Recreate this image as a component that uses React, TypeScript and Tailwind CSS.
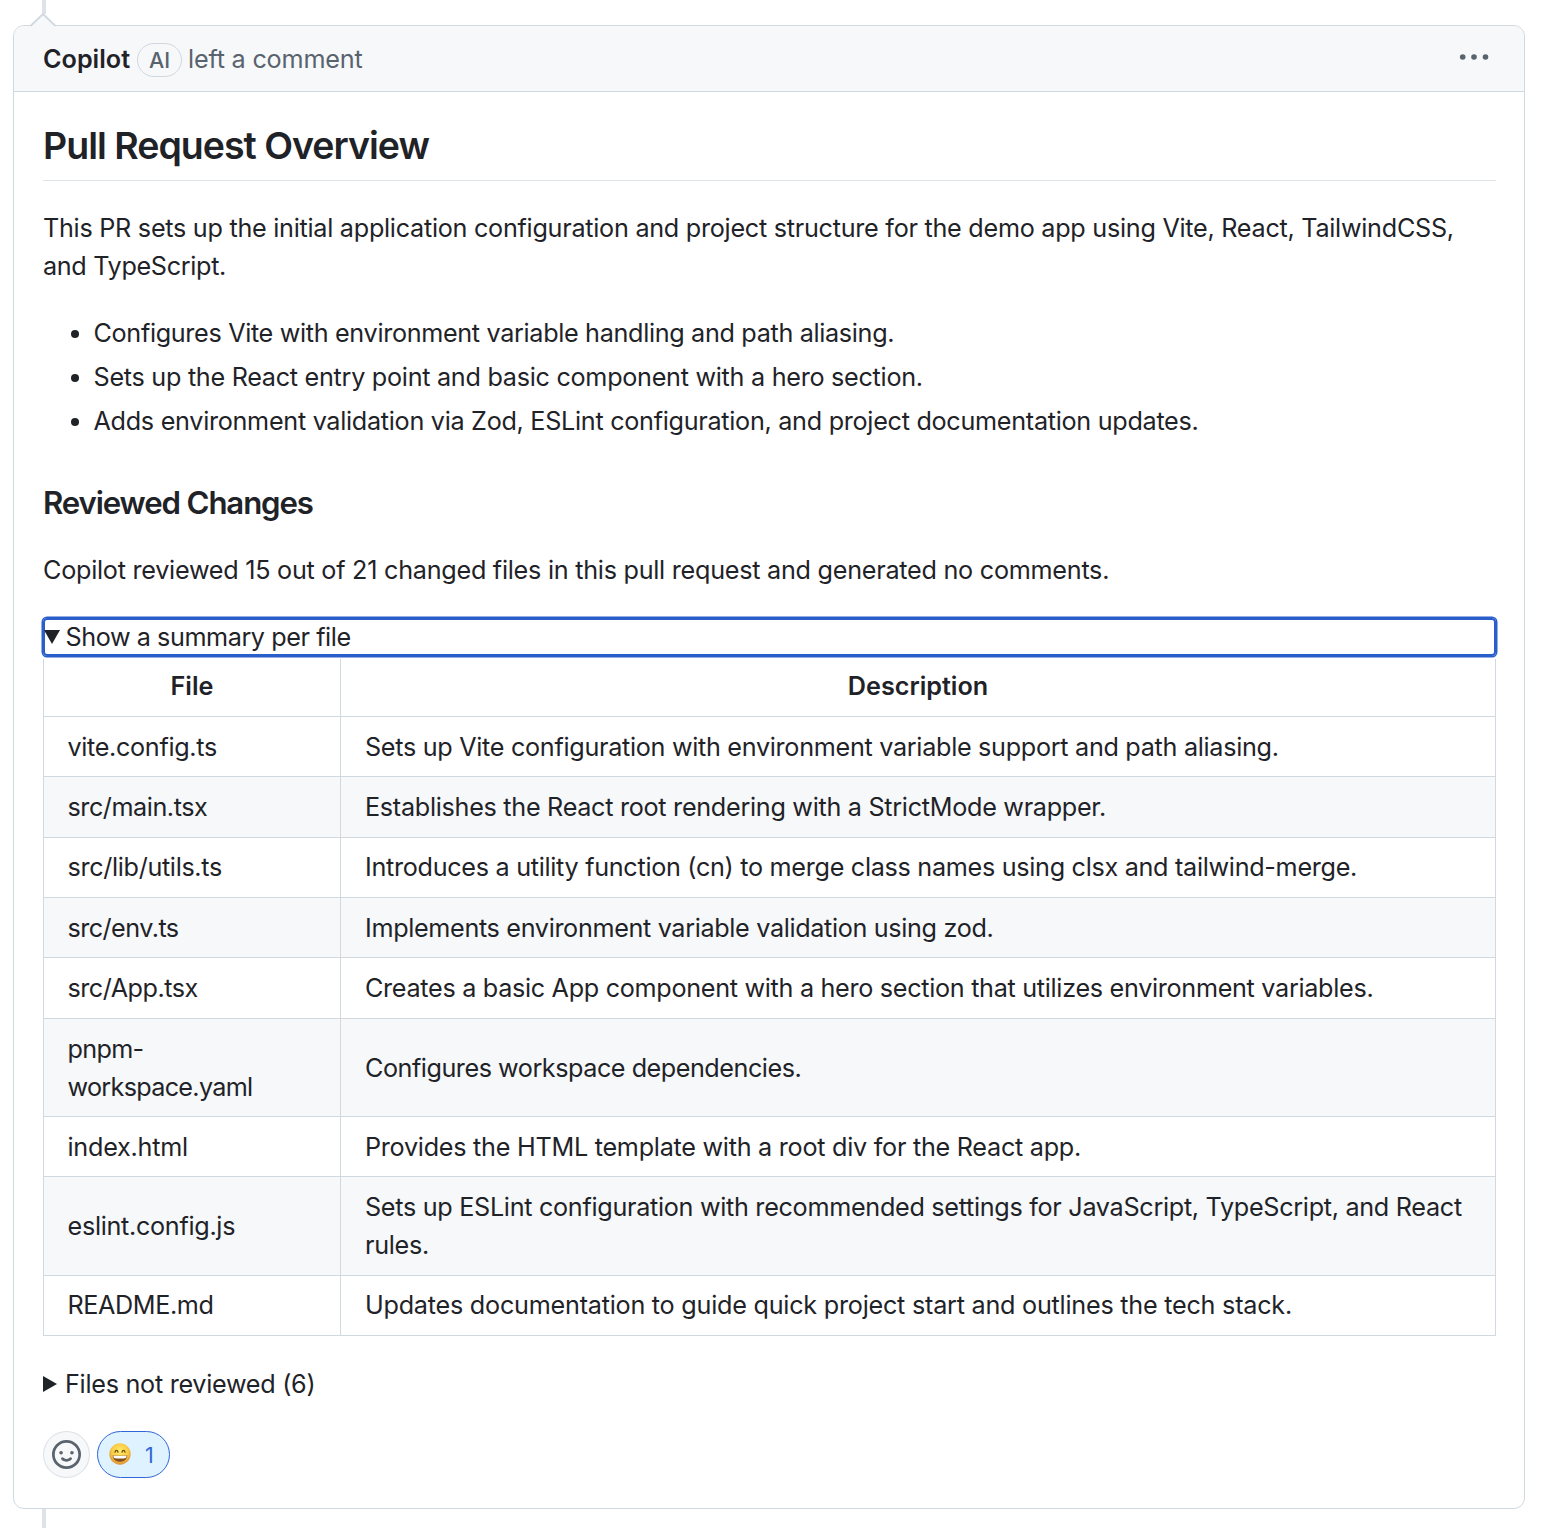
type Row = { file: string; fileTracking: string; description: string; tracking: string; height: string; pad: string; tint?: boolean };

const rows: Row[] = [
  { file: "vite.config.ts", fileTracking: "tracking-[-0.33px]", description: "Sets up Vite configuration with environment variable support and path aliasing.", tracking: "tracking-[-0.3px]", height: "h-[60px]", pad: "pt-[3px]" },
  { file: "src/main.tsx", fileTracking: "tracking-[-0.46px]", description: "Establishes the React root rendering with a StrictMode wrapper.", tracking: "tracking-[-0.29px]", height: "h-[61px]", pad: "pt-[3px]", tint: true },
  { file: "src/lib/utils.ts", fileTracking: "tracking-[-0.33px]", description: "Introduces a utility function (cn) to merge class names using clsx and tailwind-merge.", tracking: "tracking-[-0.3px]", height: "h-[60px]", pad: "pt-[1px]" },
  { file: "src/env.ts", fileTracking: "tracking-[-0.55px]", description: "Implements environment variable validation using zod.", tracking: "tracking-[-0.34px]", height: "h-[60px]", pad: "pt-[3px]", tint: true },
  { file: "src/App.tsx", fileTracking: "tracking-[-0.5px]", description: "Creates a basic App component with a hero section that utilizes environment variables.", tracking: "tracking-[-0.305px]", height: "h-[61px]", pad: "pt-[3px]" },
  { file: "pnpm-workspace.yaml", fileTracking: "tracking-[-0.7px]", description: "Configures workspace dependencies.", tracking: "tracking-[-0.47px]", height: "h-[98px]", pad: "pt-[3px]", tint: true },
  { file: "index.html", fileTracking: "tracking-[-0.24px]", description: "Provides the HTML template with a root div for the React app.", tracking: "tracking-[-0.265px]", height: "h-[60px]", pad: "pt-[3px]" },
  { file: "eslint.config.js", fileTracking: "tracking-[-0.3px]", description: "Sets up ESLint configuration with recommended settings for JavaScript, TypeScript, and React rules.", tracking: "tracking-[-0.3px]", height: "h-[99px]", pad: "pt-[3px]", tint: true },
  { file: "README.md", fileTracking: "tracking-[-0.4px]", description: "Updates documentation to guide quick project start and outlines the tech stack.", tracking: "tracking-[-0.24px]", height: "h-[60px]", pad: "pt-[1px]" },
];

const bullets = [
  { text: "Configures Vite with environment variable handling and path aliasing.", tracking: "tracking-[-0.33px]" },
  { text: "Sets up the React entry point and basic component with a hero section.", tracking: "tracking-[-0.28px]" },
  { text: "Adds environment validation via Zod, ESLint configuration, and project documentation updates.", tracking: "tracking-[-0.29px]" },
];

function GrinEmoji() {
  return (
    <svg viewBox="0 0 22 22" className="size-[22px]" aria-label="grinning face">
      <defs>
        <radialGradient id="face" cx="50%" cy="38%" r="62%">
          <stop offset="0" stopColor="#ffec6e" />
          <stop offset="0.6" stopColor="#fbcb45" />
          <stop offset="1" stopColor="#dc9035" />
        </radialGradient>
      </defs>
      <circle cx="11" cy="11" r="10.7" fill="url(#face)" />
      <path d="M6 9.200c.3-1.300.8-1.900 1.500-1.900s1.200.6 1.500 1.900M13 9.200c.3-1.300.8-1.900 1.500-1.900s1.200.6 1.500 1.900" fill="none" stroke="#6b4a12" strokeWidth="1.300" strokeLinecap="round" />
      <path d="M3.800 12.200c2.300.6 12.100.6 14.400 0 .2 3.800-3 6.500-7.200 6.500S3.600 16 3.800 12.200z" fill="#85501f" />
      <path d="M4.400 12.500c3 .6 10.200.6 13.200 0 0 1-.2 1.800-.6 2.400-2.800.7-9.200.7-12 0-.4-.6-.6-1.400-.6-2.400z" fill="#fff" />
    </svg>
  );
}

export default function App() {
  return (
    <div className="relative h-[1528px] w-[1558px] overflow-hidden bg-white pt-[25px] pl-[13px] font-['Inter',sans-serif] text-[25.2px] leading-[38px] text-[#1f2328]">
      <div className="absolute top-0 left-[42px] h-[14px] w-1 bg-[#dfe2e8]" />
      <div className="absolute top-[1509px] left-[42px] h-[19px] w-1 bg-[#dfe2e8]" />

      <section className="h-[1484px] w-[1512px] rounded-[11px] border border-[#d1d9e0] bg-white">
        <header className="flex h-[66px] items-center rounded-t-[10px] border-b border-[#d1d9e0] bg-[#f6f8fa] pt-[2px] pr-[35px] pl-[29px]">
          <span className="-mt-px mb-px font-semibold">Copilot</span>
          <span className="ml-[7px] flex h-[34px] w-[45px] items-center justify-center rounded-full border border-[#d1d9e0] text-[21.500px] font-medium text-[#59636e]">AI</span>
          <span className="-mt-px mb-px ml-[6px] tracking-[-0.2px] text-[#59636e]">left a comment</span>
          <svg viewBox="0 0 30 6" className="mb-[5px] ml-auto h-[6px] w-[30px]" fill="#59636e">
            <circle cx="3.700" cy="3" r="2.800" />
            <circle cx="15" cy="3" r="2.800" />
            <circle cx="26.500" cy="3" r="2.800" />
          </svg>
        </header>

        <div className="pt-[30px] pr-[28px] pl-[29px]">
          <h2 className="h-[59px] border-b border-[#d1d9e0]/70 text-[37.500px] leading-[47px] font-semibold tracking-[-1px]">Pull Request Overview</h2>
          <p className="mt-[28px]">
            <span className="tracking-[-0.27px]">This PR sets up the initial application configuration and project structure for the demo app using Vite, React, TailwindCSS,</span>
            <br />
            <span className="tracking-[-0.33px]">and TypeScript.</span>
          </p>
          <ul className="mt-[30px] flex flex-col gap-[6px]">
            {bullets.map((b) => (
              <li key={b.text} className="flex h-[38px] items-center">
                <span className="ml-[28px] size-2 rounded-full bg-[#1f2328]" />
                <span className={`-mt-px mb-px ml-[14.500px] ${b.tracking}`}>{b.text}</span>
              </li>
            ))}
          </ul>
          <h3 className="mt-[43px] text-[31.200px] leading-[39px] font-semibold tracking-[-1.130px]">Reviewed Changes</h3>
          <p className="mt-[28px] tracking-[-0.26px]">Copilot reviewed 15 out of 21 changed files in this pull request and generated no comments.</p>

          <div className="mt-[29px] flex h-[38px] items-center rounded-[4px] shadow-[0_0_0_1.500px_#2a5fcb,inset_0_0_0_2px_#2a5fcb]">
            <svg viewBox="0 0 16 14" className="ml-[1px] h-[14px] w-4" fill="#1f2328"><path d="M0 0h16L8 14z" /></svg>
            <span className="-mt-px mb-px ml-[5.500px] pt-px tracking-[-0.43px]">Show a summary per file</span>
          </div>

          <table className="mt-[3px] w-[1453px] table-fixed border-collapse leading-[37.700px]">
            <colgroup>
              <col className="w-[297px]" />
              <col />
            </colgroup>
            <thead>
              <tr className="h-[57px]">
                <th className="border border-t-0 border-[#d1d9e0] p-0 font-semibold">File</th>
                <th className="border border-t-0 border-[#d1d9e0] p-0 font-semibold">Description</th>
              </tr>
            </thead>
            <tbody>
              {rows.map((r) => (
                <tr key={r.file} className={`${r.height} ${r.tint ? "bg-[#f6f8fa]" : "bg-white"}`}>
                  <td className={`border border-[#d1d9e0] pr-6 pb-0 pl-[23.500px] ${r.pad} ${r.fileTracking}`}>{r.file}</td>
                  <td className={`border border-[#d1d9e0] px-6 pb-0 ${r.pad} ${r.tracking}`}>{r.description}</td>
                </tr>
              ))}
            </tbody>
          </table>

          <div className="mt-[29px] flex h-[38px] items-center">
            <svg viewBox="0 0 14 16" className="h-4 w-[14px]" fill="#1f2328"><path d="M0 0l14 8L0 16z" /></svg>
            <span className="ml-[8px] pt-px tracking-[-0.28px]">Files not reviewed (6)</span>
          </div>

          <div className="mt-[28px] flex gap-[7px]">
            <button className="flex size-[47px] items-center justify-center rounded-full border border-[#d1d9e0]/70 bg-[#f6f8fa]">
              <svg viewBox="0 0 16 16" className="size-[29px]" fill="#59636e">
                <path d="M8 0a8 8 0 1 1 0 16A8 8 0 0 1 8 0ZM1.500 8a6.500 6.500 0 1 0 13 0 6.500 6.500 0 0 0-13 0Zm3.820 1.636a.75.75 0 0 1 1.038.175l.007.009c.103.118.22.222.35.31.264.178.683.37 1.285.37.602 0 1.020-.192 1.285-.371.13-.088.247-.192.35-.31l.007-.008a.75.75 0 0 1 1.222.87l-.022-.015c.02.013.021.015.021.015v.001l-.001.002-.002.003-.005.007-.014.019a2.066 2.066 0 0 1-.184.213c-.16.166-.338.316-.53.445-.63.418-1.370.638-2.127.629-.946 0-1.652-.308-2.126-.63a3.331 3.331 0 0 1-.715-.657l-.014-.02-.005-.006-.002-.003v-.002h-.001l.613-.432-.614.430a.75.75 0 0 1 .183-1.044ZM12 7a1 1 0 1 1-2 0 1 1 0 0 1 2 0ZM5 8a1 1 0 1 1 0-2 1 1 0 0 1 0 2Z" />
              </svg>
            </button>
            <button className="flex h-[47px] w-[73px] items-center rounded-full border border-[#2f66d8] bg-[#dff2ff] pl-[11px] text-[21.500px] text-[#2f66d8]">
              <GrinEmoji />
              <span className="ml-[14px] pt-px">1</span>
            </button>
          </div>
        </div>
      </section>

      <svg viewBox="0 0 28 14" className="absolute top-[13px] left-[29px] h-[14px] w-7">
        <path d="M1.500 13L14 1l12.500 12v1h-25z" fill="#f6f8fa" />
        <path d="M1.500 13L14 1l12.500 12" fill="none" stroke="#d1d9e0" strokeWidth="1.800" />
      </svg>
    </div>
  );
}
